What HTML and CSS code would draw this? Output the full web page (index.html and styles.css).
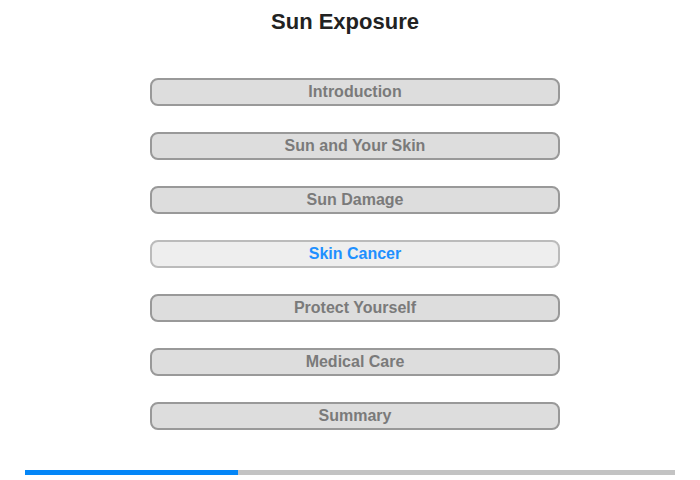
FILE: index.html
```html
<!DOCTYPE html>
<html>
<head>
<meta charset="utf-8">
<link rel="stylesheet" href="styles.css">
</head>
<body>
<div class="page">
  <h1 class="title">Sun Exposure</h1>
  <nav class="menu">
    <div class="item">Introduction</div>
    <div class="item">Sun and Your Skin</div>
    <div class="item">Sun Damage</div>
    <div class="item active">Skin Cancer</div>
    <div class="item">Protect Yourself</div>
    <div class="item">Medical Care</div>
    <div class="item">Summary</div>
  </nav>
  <div class="progress"><div class="fill" style="width:32.8%"></div></div>
</div>
</body>
</html>
```
FILE: styles.css
```css
html, body { margin: 0; padding: 0; background: #fff; }
body { font-family: "Liberation Sans", Arial, sans-serif; }
.page { width: 700px; height: 480px; display: flex; flex-direction: column; }
.title { margin: 9px 0 0; padding-right: 10px; font-size: 22px; line-height: 26px; font-weight: bold; color: #222; text-align: center; }
.menu { margin: 43px 0 0 150px; display: flex; flex-direction: column; gap: 26px; width: 410px; }
.item { box-sizing: border-box; height: 28px; border: 2px solid #999; border-radius: 8px; background: #ddd; color: #7a7a7a; font-weight: bold; font-size: 16px; line-height: 24px; text-align: center; }
.item.active { background: #eee; border-color: #bbb; color: #1e90ff; }
.progress { margin: 40px 0 0 25px; width: 650px; height: 5px; background: #c3c3c3; display: flex; }
.fill { background: #0486f7; height: 100%; }
```
